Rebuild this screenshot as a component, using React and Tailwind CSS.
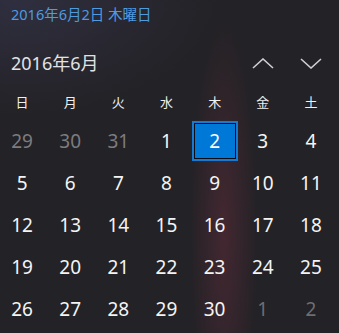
import { useState } from "react";

const weekdays = ["日", "月", "火", "水", "木", "金", "土"];

// June 2016 grid, with trailing days of May and leading days of July
const buildDays = () => {
  const days = [];
  [29, 30, 31].forEach((d) => days.push({ d, muted: true }));
  for (let d = 1; d <= 30; d++) days.push({ d, muted: false });
  [1, 2].forEach((d) => days.push({ d, muted: true }));
  return days;
};

function Chevron({ up }) {
  return (
    <svg width="22" height="11" viewBox="0 0 22 11" fill="none">
      <path
        d={up ? "M1 10 L11 1 L21 10" : "M1 1 L11 10 L21 1"}
        stroke="#cfcfd2"
        strokeWidth="1.6"
      />
    </svg>
  );
}

export default function App() {
  const [selected] = useState(2);
  const days = buildDays();

  return (
    <div
      className="w-[339px] h-[333px] overflow-hidden text-white bg-[#232226] bg-[radial-gradient(ellipse_60%_35%_at_5%_0%,rgba(70,70,110,0.35),transparent),radial-gradient(ellipse_10%_65%_at_66%_70%,rgba(100,45,60,0.5),transparent)]"
      style={{ fontFamily: '"Noto Sans", "Noto Sans CJK JP", sans-serif' }}
    >
      <div className="h-[40px] pl-[11px] pt-[4px] text-[14.5px] leading-[20px] text-[#4e9be0]">
        2016年6月2日 木曜日
      </div>

      <div className="h-[46px] flex items-center justify-between pl-[11px] pr-[4px]">
        <span className="text-[18px] text-[#e2e2e4]">2016年6月</span>
        <div className="flex">
          <div className="w-[48px] flex justify-center">
            <Chevron up />
          </div>
          <div className="w-[48px] flex justify-center">
            <Chevron />
          </div>
        </div>
      </div>

      <div className="-ml-[2px] w-[337px] grid grid-cols-7 h-[34px] items-center text-[13px] text-[#f0f0f0]">
        {weekdays.map((w) => (
          <div key={w} className="text-center">
            {w}
          </div>
        ))}
      </div>

      <div className="-ml-[2px] w-[337px] grid grid-cols-7 auto-rows-[42px] text-[19px]">
        {days.map((day, i) => {
          const isSel = !day.muted && day.d === selected;
          return (
            <div key={i} className="flex items-center justify-center">
              {isSel ? (
                <div className="w-[46px] h-[40px] border-2 border-[#1779d0] bg-[#0b0b14]">
                  <div className="w-full h-full border-[1.5px] border-[#0b0b14] bg-[#0078d7] flex items-center justify-center">
                    {day.d}
                  </div>
                </div>
              ) : (
                <span className={day.muted ? (i < 3 ? "text-[#7c7c7f]" : "text-[#6e6e72]") : "text-[#f4f4f4]"}>
                  {day.d}
                </span>
              )}
            </div>
          );
        })}
      </div>
    </div>
  );
}
